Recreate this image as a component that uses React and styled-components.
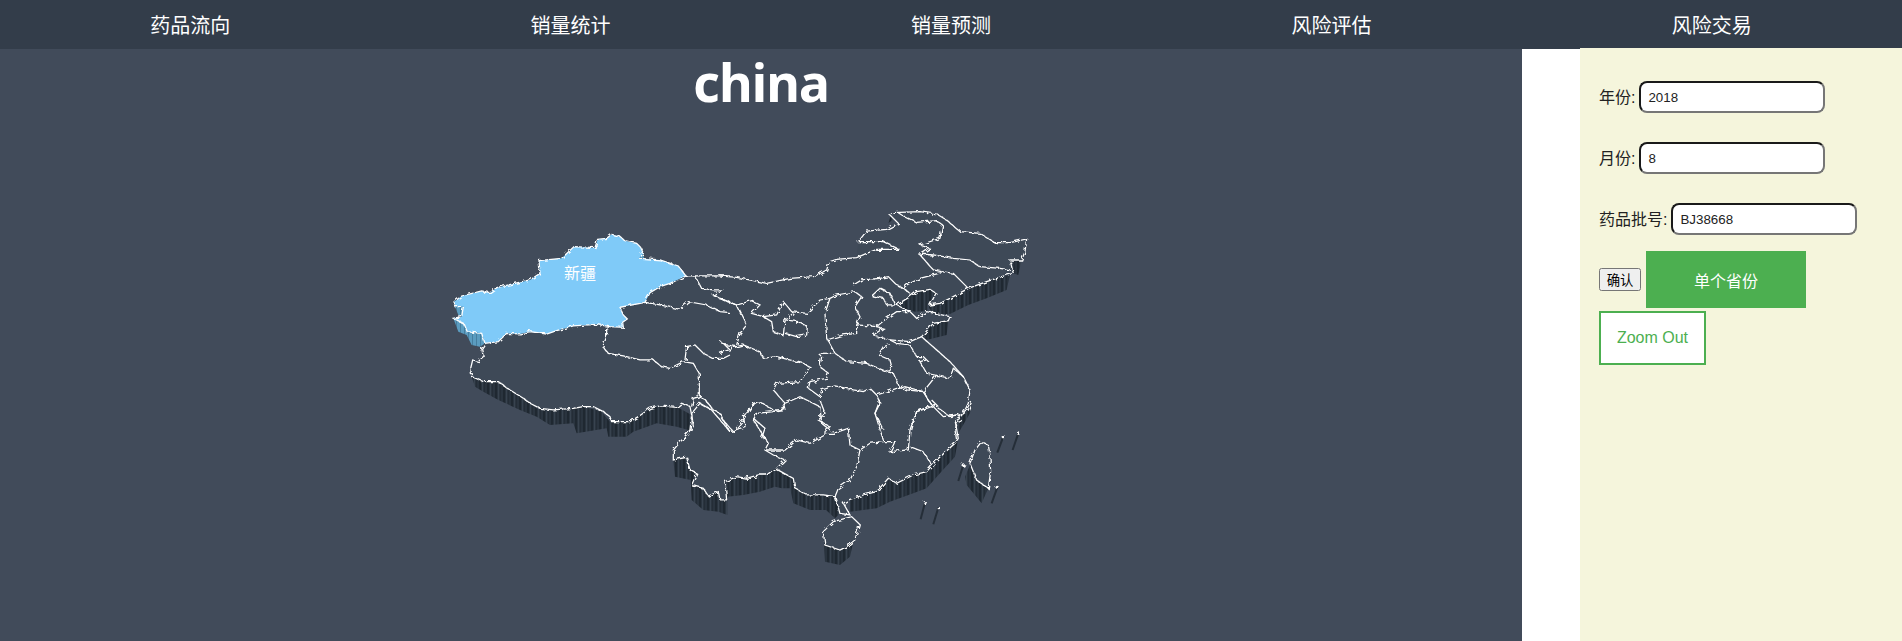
import React from 'react';
import styled, { createGlobalStyle } from 'styled-components';

const sans = '"Liberation Sans", "Noto Sans CJK SC", sans-serif';

const GlobalStyle = createGlobalStyle`
    html, body {
        margin: 0;
        height: 100%;
        background: #fff;
        font-family: ${sans};
    }
    #root { height: 100%; }
`;

const Page = styled.div`
    height: 100vh;
    overflow: hidden;
`;

const Nav = styled.nav`
    display: grid;
    grid-template-columns: repeat(5, 1fr);
    height: 49px;
    background: #333d4a;
`;

const NavItem = styled.a`
    display: flex;
    align-items: center;
    justify-content: center;
    color: #fff;
    font-size: 20px;
    font-family: "Noto Sans CJK SC", sans-serif;
    font-weight: 400;
`;

const Body = styled.div`
    display: flex;
    justify-content: space-between;
    height: calc(100% - 49px);
`;

const MapPanel = styled.section`
    width: 1522px;
    background: #414b5a;
`;

const Title = styled.h1`
    margin: 0;
    height: 70px;
    color: #fff;
    font: 700 52px/66px "Open Sans", sans-serif;
    text-align: center;
    letter-spacing: -1.4px;
`;

const MapSvg = styled.svg`
    display: block;
`;

const SidePanel = styled.aside`
    display: flex;
    flex-direction: column;
    align-items: flex-start;
    gap: 29px;
    box-sizing: border-box;
    width: 322px;
    margin-top: -1px;
    padding: 33px 19px;
    background: #f5f5dc;
    color: #222;
    font-size: 16px;
`;

const Field = styled.label`
    display: flex;
    align-items: center;
    gap: 4px;
    height: 32px;
`;

const Caption = styled.span`
    margin-bottom: 2px;
`;

const Input = styled.input`
    box-sizing: border-box;
    width: 186px;
    height: 32px;
    padding: 1px 7px;
    border: 2px solid;
    border-color: #1a1a1a #767676 #767676 #1a1a1a;
    border-radius: 8px;
    background: #fff;
    color: #222;
    font: 13.33px ${sans};
`;

const Actions = styled.div`
    display: flex;
    flex-direction: column;
    align-items: flex-start;
    gap: 3px;
    margin-top: -13px;
`;

const ActionRow = styled.div`
    display: flex;
    align-items: center;
    gap: 5px;
`;

const Submit = styled.button`
    width: 42px;
    height: 23px;
    padding: 0;
    font: 13.33px ${sans};
`;

const GreenButton = styled.button`
    width: 160px;
    height: 57px;
    border: none;
    background: #4caf50;
    color: #fff;
    font: 16px ${sans};
`;

const OutlineButton = styled.button`
    width: 107px;
    height: 54px;
    padding: 0;
    border: 2px solid #4caf50;
    background: #fff;
    color: #4caf50;
    font: 16px ${sans};
`;

const Label = styled.text`
    fill: #fff;
    font: 16px "Noto Sans CJK SC", sans-serif;
    text-anchor: middle;
`;

const navItems = ['药品流向', '销量统计', '销量预测', '风险评估', '风险交易'];

// map outlines, traced per area: west, north east, south
const west = {
    xinjiang: '545,133 570,140 585,152 620,160 632,172 640,190 628,205 690,210 745,228 768,258 720,280 690,290 660,308 645,337 570,352 580,375 592,387 578,397 580,412 540,410 500,403 430,408 380,422 350,432 300,425 270,432 230,430 205,455 165,460 155,430 110,425 100,400 70,385 95,380 100,350 75,350 72,335 95,318 155,303 180,308 200,293 300,270 330,250 327,212 395,205 432,170 495,173 503,148 530,145',
    land: '165,460 155,475 160,500 145,515 128,510 122,535 125,560 160,575 205,575 240,600 280,625 330,655 370,660 430,655 460,650 520,665 545,695 600,695 660,655 690,648 740,652 780,650 785,675 780,720 760,750 900,750 900,258 768,258',
    walls: [
        '125,560 160,575 205,575 240,600 280,625 320,655 370,660 430,655 460,650 510,660 540,695 600,695 670,650 740,650 785,675 785,720 775,720 740,710 680,700 610,725 590,740 535,740 530,715 440,730 430,700 360,705 320,680 270,660 205,630 160,605 135,590',
    ],
    blue: [
        '75,350 100,350 97,380 85,375',
        '70,385 100,400 110,425 155,430 165,460 150,470 125,465 110,435 85,425',
        '628,205 640,190 642,205',
    ],
    lines: [
        '165,460 155,475 160,500 145,515 128,510 122,535 125,560 160,575 205,575 240,600 280,625 300,640 330,655 370,660 430,655 460,650 490,650 520,665 540,680 545,695 600,695 625,680 660,655 690,648 740,652 755,640 780,650 785,675 780,720 760,745',
        '530,415 530,440 518,470 535,490 580,498 630,510 670,510 695,530 720,535 760,515 790,520 808,550 808,620 790,625 785,650',
        '808,620 825,628 850,660 870,670 885,700 900,725',
        '768,258 840,258 900,258',
        '795,258 815,295 850,300 875,300 850,315 900,340',
        '645,337 690,345 750,358 775,335 830,345 870,365 900,368',
        '765,510 770,470 795,465 820,490 850,505 880,505 900,495',
        '880,460 900,480',
    ],
};

const northEast = {
    land: '0,258 50,262 100,272 140,280 210,265 280,260 320,240 328,215 350,208 410,203 415,155 440,123 500,118 535,100 510,75 520,68 600,65 650,72 680,90 720,125 780,130 825,158 870,158 920,147 915,185 905,210 870,210 880,250 845,260 800,275 745,295 690,325 660,340 630,345 620,365 690,380 685,392 640,400 605,440 650,480 690,515 730,560 750,600 745,640 735,660 715,690 710,750 0,750',
    walls: [
        '625,345 690,325 745,295 800,275 845,258 870,255 860,300 800,325 745,345 690,372 640,372 625,350',
        '870,210 905,210 895,255 880,250',
        '605,440 640,400 685,392 680,435 620,450',
        '415,155 490,155 538,178 470,182 430,195 415,197',
        '505,100 535,75 512,78',
        '320,225 330,215 330,240',
    ],
    bay: '530,345 575,315 600,300 630,298 648,308 622,345 622,362 585,365 550,355',
    lines: [
        '0,258 50,262 100,272 140,280 210,265 280,260 320,240 328,215 350,208 410,203 440,190 470,178 538,178 490,155 415,155 440,123 500,118 535,100 510,75 520,68 600,65 650,72 680,90 720,125 780,130 825,158 870,158 920,147 915,185 905,210 870,210 880,250 845,260 800,275 745,295 690,325 660,340 630,345 648,310 630,298 590,305 570,320 530,345 570,365 590,385 620,365 690,380 685,392 640,400 605,440 650,480 690,515 730,560 750,600 745,640 735,660 715,690 705,720 710,750',
        '535,68 545,75 590,97 650,92 668,105 660,145 600,165 630,175 600,195 640,240 665,245',
        '595,192 640,195 700,205 750,210 780,230 840,235 870,240',
        '665,245 700,250 745,295',
        '665,248 600,265 560,285 550,295 570,310',
        '400,285 425,270 480,265 505,260 530,285 550,295',
        '455,318 480,295 510,310 525,345 500,345 490,325 455,318',
        '330,325 315,370 320,445 345,490',
        '330,325 350,315 405,305 425,320 405,350 420,380 410,405',
        '410,405 470,410 500,385 530,365 575,365',
        '320,450 370,435 410,430 410,405',
        '460,435 490,415 470,410',
        '460,435 510,450 570,455 605,440',
        '510,450 530,460 570,465 590,500 610,500 620,510 600,515 620,550 690,565 700,535 730,560',
        '345,490 380,515 440,520 500,545 520,550 540,595 555,590 610,605 650,555',
        '475,495 490,470 510,465',
        '475,495 510,510 515,530 500,545',
        '295,490 340,490',
        '295,490 305,500 300,530 325,550 320,565 270,575 265,595 300,620',
        '300,620 305,600 345,588 400,600 430,605 450,595 470,615 530,595 560,600 610,605 625,630 640,650 670,680 720,675',
        '610,605 635,645 590,665 575,720',
        '470,615 480,640 465,670 490,720',
        '0,325 50,345 95,332 120,345 95,370 130,380 170,375 190,335 215,365 260,370 300,330 330,325',
        '130,380 155,395 160,425 190,435 195,390 220,370',
        '195,390 235,395 262,410 260,435 230,440 195,430',
        '0,490 50,470 70,465 120,485 130,505 170,500 250,520 270,530 240,575 170,580 160,600 195,640 240,620 300,650 305,700 330,720',
        '0,325 50,345 80,405 60,430 50,465',
        '0,455 20,465 50,470',
        '120,635 100,640 70,690 40,725 0,680',
        '120,635 160,660 195,660 190,635',
        '100,685 135,715 125,745',
    ],
};

const south = {
    land: '125,40 130,80 70,150 70,180 110,172 120,210 140,220 125,255 160,265 175,288 205,275 210,300 230,300 225,245 260,230 290,235 325,225 350,225 375,205 430,235 435,265 470,285 520,285 555,290 570,340 600,345 580,310 600,298 640,285 680,275 715,235 740,250 790,225 830,215 860,180 915,130 925,115 915,60 955,30 965,5 965,0 125,0',
    walls: [
        '70,180 110,172 120,210 140,220 125,255 160,265 175,288 205,275 210,300 230,300 225,245 260,230 290,235 325,225 350,225 375,205 430,235 435,265 470,285 520,285 555,290 570,340 555,355 528,330 480,330 430,310 420,265 395,265 375,260 330,275 280,285 232,290 232,345 205,335 160,330 125,300 122,240 75,230',
        '600,298 640,285 680,275 715,235 740,250 790,225 830,215 860,180 915,130 925,115 915,170 870,220 830,265 790,280 720,305 680,325 600,335',
        '955,30 965,10 960,40 925,100 915,60',
        '520,395 525,435 570,450 590,440 615,420 628,372 610,425 600,470 570,495 525,485',
        '960,195 945,230 950,255 995,310 1015,265 980,240',
    ],
    land2: [
        '550,365 605,350 628,372 615,420 590,440 570,450 525,435 520,395',
        '995,125 1015,135 1020,165 1022,215 1015,265 980,240 960,190 975,150',
    ],
    sticks: [
        '1060,110 1042,158',
        '1105,100 1088,150',
        '940,195 925,243',
        '1042,262 1025,310',
        '825,308 812,358',
        '865,323 850,373',
    ],
    lines: [
        '125,40 130,80 70,150 70,180 110,172 120,210 140,220 125,255 160,265 175,288 205,275 210,300 230,300 225,245 260,230 290,235 325,225 350,225 375,205 430,235 435,265 470,285 520,285 555,290 570,340 600,345 580,310 600,298 640,285 680,275 715,235 740,250 790,225 830,215 860,180 915,130 925,115 915,60 955,30 965,5',
        '125,40 150,10 185,30 240,95 285,80 280,45 320,5',
        '380,205 405,180 370,165 345,150 355,130 310,60 320,40 370,35 405,25',
        '345,150 405,150 440,120 480,130 525,105 525,95 540,80 505,60 525,40 510,0',
        '530,100 550,100 595,85 600,135 630,150 620,200 600,240 565,265 555,290',
        '630,150 660,130 700,125 735,125 720,155 775,150 780,90 800,35 860,15 845,0',
        '780,140 820,155 845,195',
        '700,120 675,40 690,0',
        '860,20 900,50 935,40',
        '550,365 605,350 628,372 615,420 590,440 570,450 525,435 520,395 550,365',
        '995,125 1015,135 1020,165 1022,215 1015,265 980,240 960,190 975,150 995,125',
    ],
};

const Walls = ({ items, fill = 'url(#wall)' }) =>
    items.map((points) => <polygon key={points} points={points} fill={fill} />);

const Lines = ({ items }) =>
    items.map((points) => <polyline key={points} points={points} fill="none" stroke="#fff" strokeWidth="3.8" />);

const Area = ({ x, y, children }) => (
    <g transform={`translate(${x} ${y}) scale(0.3333)`}>{children}</g>
);

const LAND = '#3e4957';

const ChinaMap = () => (
    <MapSvg width="1522" height="522" viewBox="0 119 1522 522">
        <defs>
            <pattern id="wall" patternUnits="userSpaceOnUse" width="24" height="60">
                <rect width="24" height="60" fill="#2a343f" />
                <rect x="3" width="6" height="60" fill="#1f2831" />
                <rect x="12" width="3" height="60" fill="#38434f" />
                <rect x="18" width="3" height="60" fill="#242d37" />
            </pattern>
            <pattern id="wallBlue" patternUnits="userSpaceOnUse" width="12" height="60">
                <rect width="12" height="60" fill="#5b9cc0" />
                <rect x="6" width="3" height="60" fill="#467f9f" />
            </pattern>
            <filter id="rough" x="-5%" y="-5%" width="110%" height="110%">
                <feTurbulence type="fractalNoise" baseFrequency="0.22" numOctaves="2" seed="4" />
                <feDisplacementMap in="SourceGraphic" scale="5" />
            </filter>
        </defs>

        <Area x={430} y={190}><Walls items={west.walls} /><Walls items={west.blue} fill="url(#wallBlue)" /></Area>
        <Area x={720} y={190}><Walls items={northEast.walls} /></Area>
        <Area x={650} y={400}>
            <Walls items={south.walls} />
            {south.sticks.map((points) => (
                <polyline key={points} points={points} fill="none" stroke="#252e38" strokeWidth="6" />
            ))}
        </Area>

        <Area x={430} y={190}><polygon points={west.land} fill={LAND} /></Area>
        <Area x={720} y={190}>
            <polygon points={northEast.land} fill={LAND} />
            <polygon points={northEast.bay} fill="url(#wall)" />
        </Area>
        <Area x={650} y={400}>
            <polygon points={south.land} fill={LAND} />
            <Walls items={south.land2} fill={LAND} />
        </Area>
        <Area x={430} y={190}><polygon points={west.xinjiang} fill="#7fcaf8" /></Area>

        <g filter="url(#rough)">
            <Area x={430} y={190}>
                <Lines items={west.lines} />
                <polygon points={west.xinjiang} fill="none" stroke="#fff" strokeWidth="3.8" />
            </Area>
            <Area x={720} y={190}><Lines items={northEast.lines} /></Area>
            <Area x={650} y={400}>
                <Lines items={south.lines} />
                {south.sticks.map((points) => {
                    const [cx, cy] = points.split(' ')[0].split(',');
                    return <circle key={points} cx={cx} cy={cy} r="5" fill="#fff" />;
                })}
            </Area>
        </g>

        <Label x="580" y="279">新疆</Label>
    </MapSvg>
);

const App = () => (
    <Page>
        <GlobalStyle />
        <Nav>
            {navItems.map((item) => <NavItem key={item}>{item}</NavItem>)}
        </Nav>
        <Body>
            <MapPanel>
                <Title>china</Title>
                <ChinaMap />
            </MapPanel>
            <SidePanel>
                <Field><Caption>年份:</Caption> <Input defaultValue="2018" /></Field>
                <Field><Caption>月份:</Caption> <Input defaultValue="8" /></Field>
                <Field><Caption>药品批号:</Caption> <Input defaultValue="BJ38668" /></Field>
                <Actions>
                    <ActionRow>
                        <Submit>确认</Submit>
                        <GreenButton>单个省份</GreenButton>
                    </ActionRow>
                    <OutlineButton>Zoom Out</OutlineButton>
                </Actions>
            </SidePanel>
        </Body>
    </Page>
);

export default App;
